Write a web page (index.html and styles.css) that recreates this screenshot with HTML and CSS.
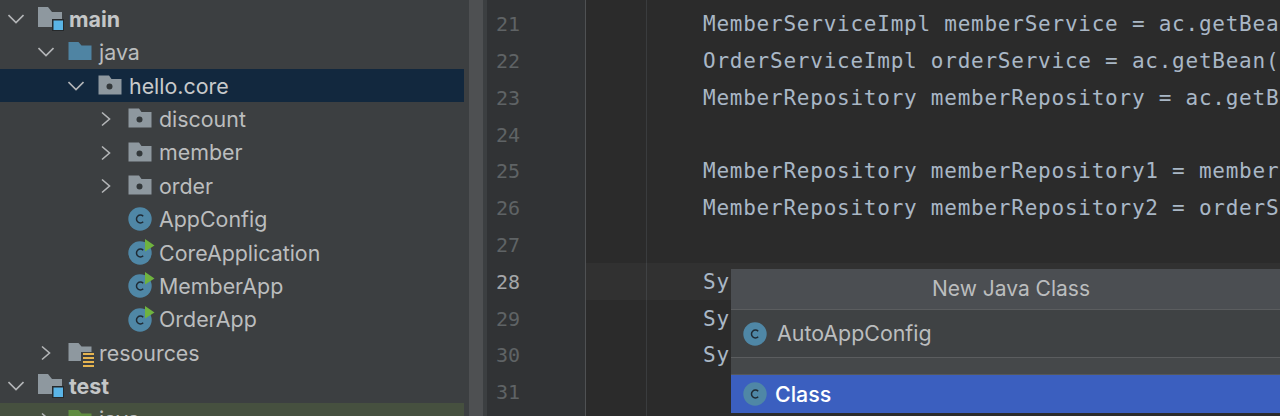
FILE: index.html
```html
<!DOCTYPE html>
<html lang="en">
<head>
<meta charset="utf-8">
<title>IDE</title>
<link rel="stylesheet" href="styles.css">
</head>
<body>
<svg class="defs" width="0" height="0" aria-hidden="true">
  <symbol id="chev-down" viewBox="0 0 16 16"><path d="M.5 4l7.500 7.500L15.500 4" fill="none" stroke="#b4b6b8" stroke-width="1.600"/></symbol>
  <symbol id="chev-right" viewBox="0 0 16 16"><path d="M4 1.500l7.500 6.500-7.500 6.500" fill="none" stroke="#b4b6b8" stroke-width="1.600"/></symbol>
  <symbol id="pkg" viewBox="0 0 24 24"><path d="M.5 1.500h10.500l2.500 3.500h10V20.500H.5z" fill="#8e989f"/><circle cx="11.500" cy="12.500" r="3" fill="#33383b"/></symbol>
  <symbol id="cls" viewBox="0 0 24 24"><circle cx="12" cy="12" r="11.700" fill="#4f87a6"/><path d="M15.200 9.300a3.900 3.900 0 1 0 0 5.400" fill="none" stroke="#1f2b35" stroke-width="1.500"/></symbol>
  <symbol id="root" viewBox="0 0 26 26"><path d="M0 1h10l4 5h10v15H0z" fill="#8e989f"/><rect x="14" y="13" width="12" height="12" fill="#26292b"/><rect x="15.500" y="14.500" width="9.500" height="9.500" fill="#5ab4e6"/></symbol>
</svg>
<main class="ide">
  <nav class="tree">
    <div class="row d1"><svg class="chev"><use href="#chev-down"/></svg>
      <svg class="ic wide"><use href="#root"/></svg>
      <span class="b">main</span></div>
    <div class="row d2"><svg class="chev"><use href="#chev-down"/></svg>
      <svg class="ic" viewBox="0 0 24 24"><path d="M.5 2h10l3 3.500h10V20H.5z" fill="#4f84a3"/></svg>
      <span>java</span></div>
    <div class="row d3 sel"><svg class="chev"><use href="#chev-down"/></svg>
      <svg class="ic"><use href="#pkg"/></svg>
      <span>hello.core</span></div>
    <div class="row d4"><svg class="chev"><use href="#chev-right"/></svg>
      <svg class="ic"><use href="#pkg"/></svg><span>discount</span></div>
    <div class="row d4"><svg class="chev"><use href="#chev-right"/></svg>
      <svg class="ic"><use href="#pkg"/></svg><span>member</span></div>
    <div class="row d4"><svg class="chev"><use href="#chev-right"/></svg>
      <svg class="ic"><use href="#pkg"/></svg><span>order</span></div>
    <div class="row d4"><i class="chev"></i>
      <svg class="ic"><use href="#cls"/></svg><span>AppConfig</span></div>
    <div class="row d4"><i class="chev"></i>
      <svg class="ic" viewBox="0 0 24 24"><use href="#cls"/><path d="M17-2l9.500 6.500-9.500 6z" fill="#6fb33f"/></svg><span>CoreApplication</span></div>
    <div class="row d4"><i class="chev"></i>
      <svg class="ic" viewBox="0 0 24 24"><use href="#cls"/><path d="M17-2l9.500 6.500-9.500 6z" fill="#6fb33f"/></svg><span>MemberApp</span></div>
    <div class="row d4"><i class="chev"></i>
      <svg class="ic" viewBox="0 0 24 24"><use href="#cls"/><path d="M17-2l9.500 6.500-9.500 6z" fill="#6fb33f"/></svg><span>OrderApp</span></div>
    <div class="row d2"><svg class="chev"><use href="#chev-right"/></svg>
      <svg class="ic" viewBox="0 0 24 24"><path d="M.5 2h10l3 3.500h10V20H.5z" fill="#8e989f"/><rect x="13" y="11" width="14" height="17" fill="#3c3f41"/><path d="M15 13h11M15 17h11M15 21h11M15 25h11" stroke="#e6b450" stroke-width="2"/></svg>
      <span>resources</span></div>
    <div class="row d1"><svg class="chev"><use href="#chev-down"/></svg>
      <svg class="ic wide"><use href="#root"/></svg>
      <span class="b">test</span></div>
    <div class="row d2 green"><svg class="chev"><use href="#chev-right"/></svg>
      <svg class="ic" viewBox="0 0 24 24"><path d="M.5 2h10l3 3.500h10V20H.5z" fill="#5f8c3f"/></svg>
      <span>java</span></div>
  </nav>
  <div class="scrollbar"><div class="thumb"></div></div>
  <div class="gutter">
    <div class="num">21</div><div class="num">22</div><div class="num">23</div><div class="num">24</div><div class="num">25</div><div class="num">26</div><div class="num">27</div><div class="num cur">28</div><div class="num">29</div><div class="num">30</div><div class="num">31</div>
  </div>
  <div class="code">
    <div class="ln">MemberServiceImpl memberService = ac.getBean(</div>
    <div class="ln">OrderServiceImpl orderService = ac.getBean(</div>
    <div class="ln">MemberRepository memberRepository = ac.getBean(</div>
    <div class="ln"></div>
    <div class="ln">MemberRepository memberRepository1 = memberService</div>
    <div class="ln">MemberRepository memberRepository2 = orderService</div>
    <div class="ln"></div>
    <div class="ln cur">Sy</div>
    <div class="ln">Sy</div>
    <div class="ln">Sy</div>
    <div class="ln"></div>
  </div>
  <section class="popup">
    <header class="title">New Java Class</header>
    <div class="item"><svg class="ic"><use href="#cls"/></svg><span>AutoAppConfig</span></div>
    <div class="gap"></div>
    <div class="item active"><svg class="ic"><use href="#cls"/></svg><span>Class</span></div>
  </section>
</main>
</body>
</html>
```
FILE: styles.css
```css
* { box-sizing: border-box; }
html, body { margin: 0; height: 416px; overflow: hidden; background: #2b2b2b; }
.defs { position: absolute; }
.ide { display: flex; height: 416px; overflow: hidden; position: relative; }
.tree { width: 468px; flex: none; background: #3c3f41; padding-top: 2.3px; font: 21.4px/33.4px Inter, "Liberation Sans", sans-serif; color: #bbbdbe; }
.row { height: 33.4px; display: flex; align-items: center; margin-right: 4px; white-space: nowrap; }
.row span { padding-top: 1px; }
.row.sel { background: #12283e; color: #c8cacb; }
.row.green { background: #46503f; }
.row.d1 { padding-left: 8px; }
.row.d2 { padding-left: 38px; }
.row.d3 { padding-left: 68px; }
.row.d4 { padding-left: 98px; }
.chev { width: 16px; height: 16px; flex: none; display: block; }
.ic { width: 24px; height: 24px; flex: none; overflow: visible; }
.row .ic { margin: 0 7px 0 14px; }
.row .ic.wide { width: 26px; height: 26px; margin-right: 5px; }
.b { font-weight: 700; color: #c4c6c7; }
.scrollbar { width: 19px; flex: none; background: #3c3f41; padding-left: 1px; }
.thumb { width: 14px; height: 100%; background: #4e5052; }
.gutter { width: 99px; flex: none; background: #313335; border-right: 1px solid #4f5153; font: 20px/36.8px "DejaVu Sans Mono", monospace; color: #5f6365; padding-left: 9px; padding-top: 5.3px; }
.num { height: 36.8px; padding-top: 1px; }
.num.cur { color: #a4a6a8; }
.code { flex: 1; min-width: 0; padding-top: 5.3px; background: linear-gradient(#3a3c3e, #3a3c3e) 60px 0 / 1px 100% no-repeat #2b2b2b; font: 21px/36.8px "DejaVu Sans Mono", monospace; letter-spacing: .76px; color: #a9b7c6; white-space: nowrap; overflow: hidden; }
.ln { height: 36.8px; padding: 1px 0 0 117px; }
.ln.cur { background: rgba(255, 255, 255, .03); }
.popup { position: absolute; left: 731px; top: 269px; width: 560px; background: #3f4244; font: 21.4px/1 Inter, "Liberation Sans", sans-serif; color: #bbbdbe; }
.title { height: 41px; background: #4b4e52; border-bottom: 1px solid #5b5d5f; display: flex; align-items: center; justify-content: center; padding-bottom: 2px; font-size: 21px; color: #bbbdbe; }
.item { height: 47px; display: flex; align-items: center; padding-left: 12px; }
.gap { height: 18px; border-top: 1px solid #5b5d5f; border-bottom: 1px solid #55585a; background: #45484a; }
.item.active { height: 38px; background: #3b5fbf; color: #fff; font-weight: 500; }
.item.active span { padding-top: 2px; }
.item .ic { margin: 0 10px 0 0; }
.item.active .ic { margin-right: 8px; }
```
